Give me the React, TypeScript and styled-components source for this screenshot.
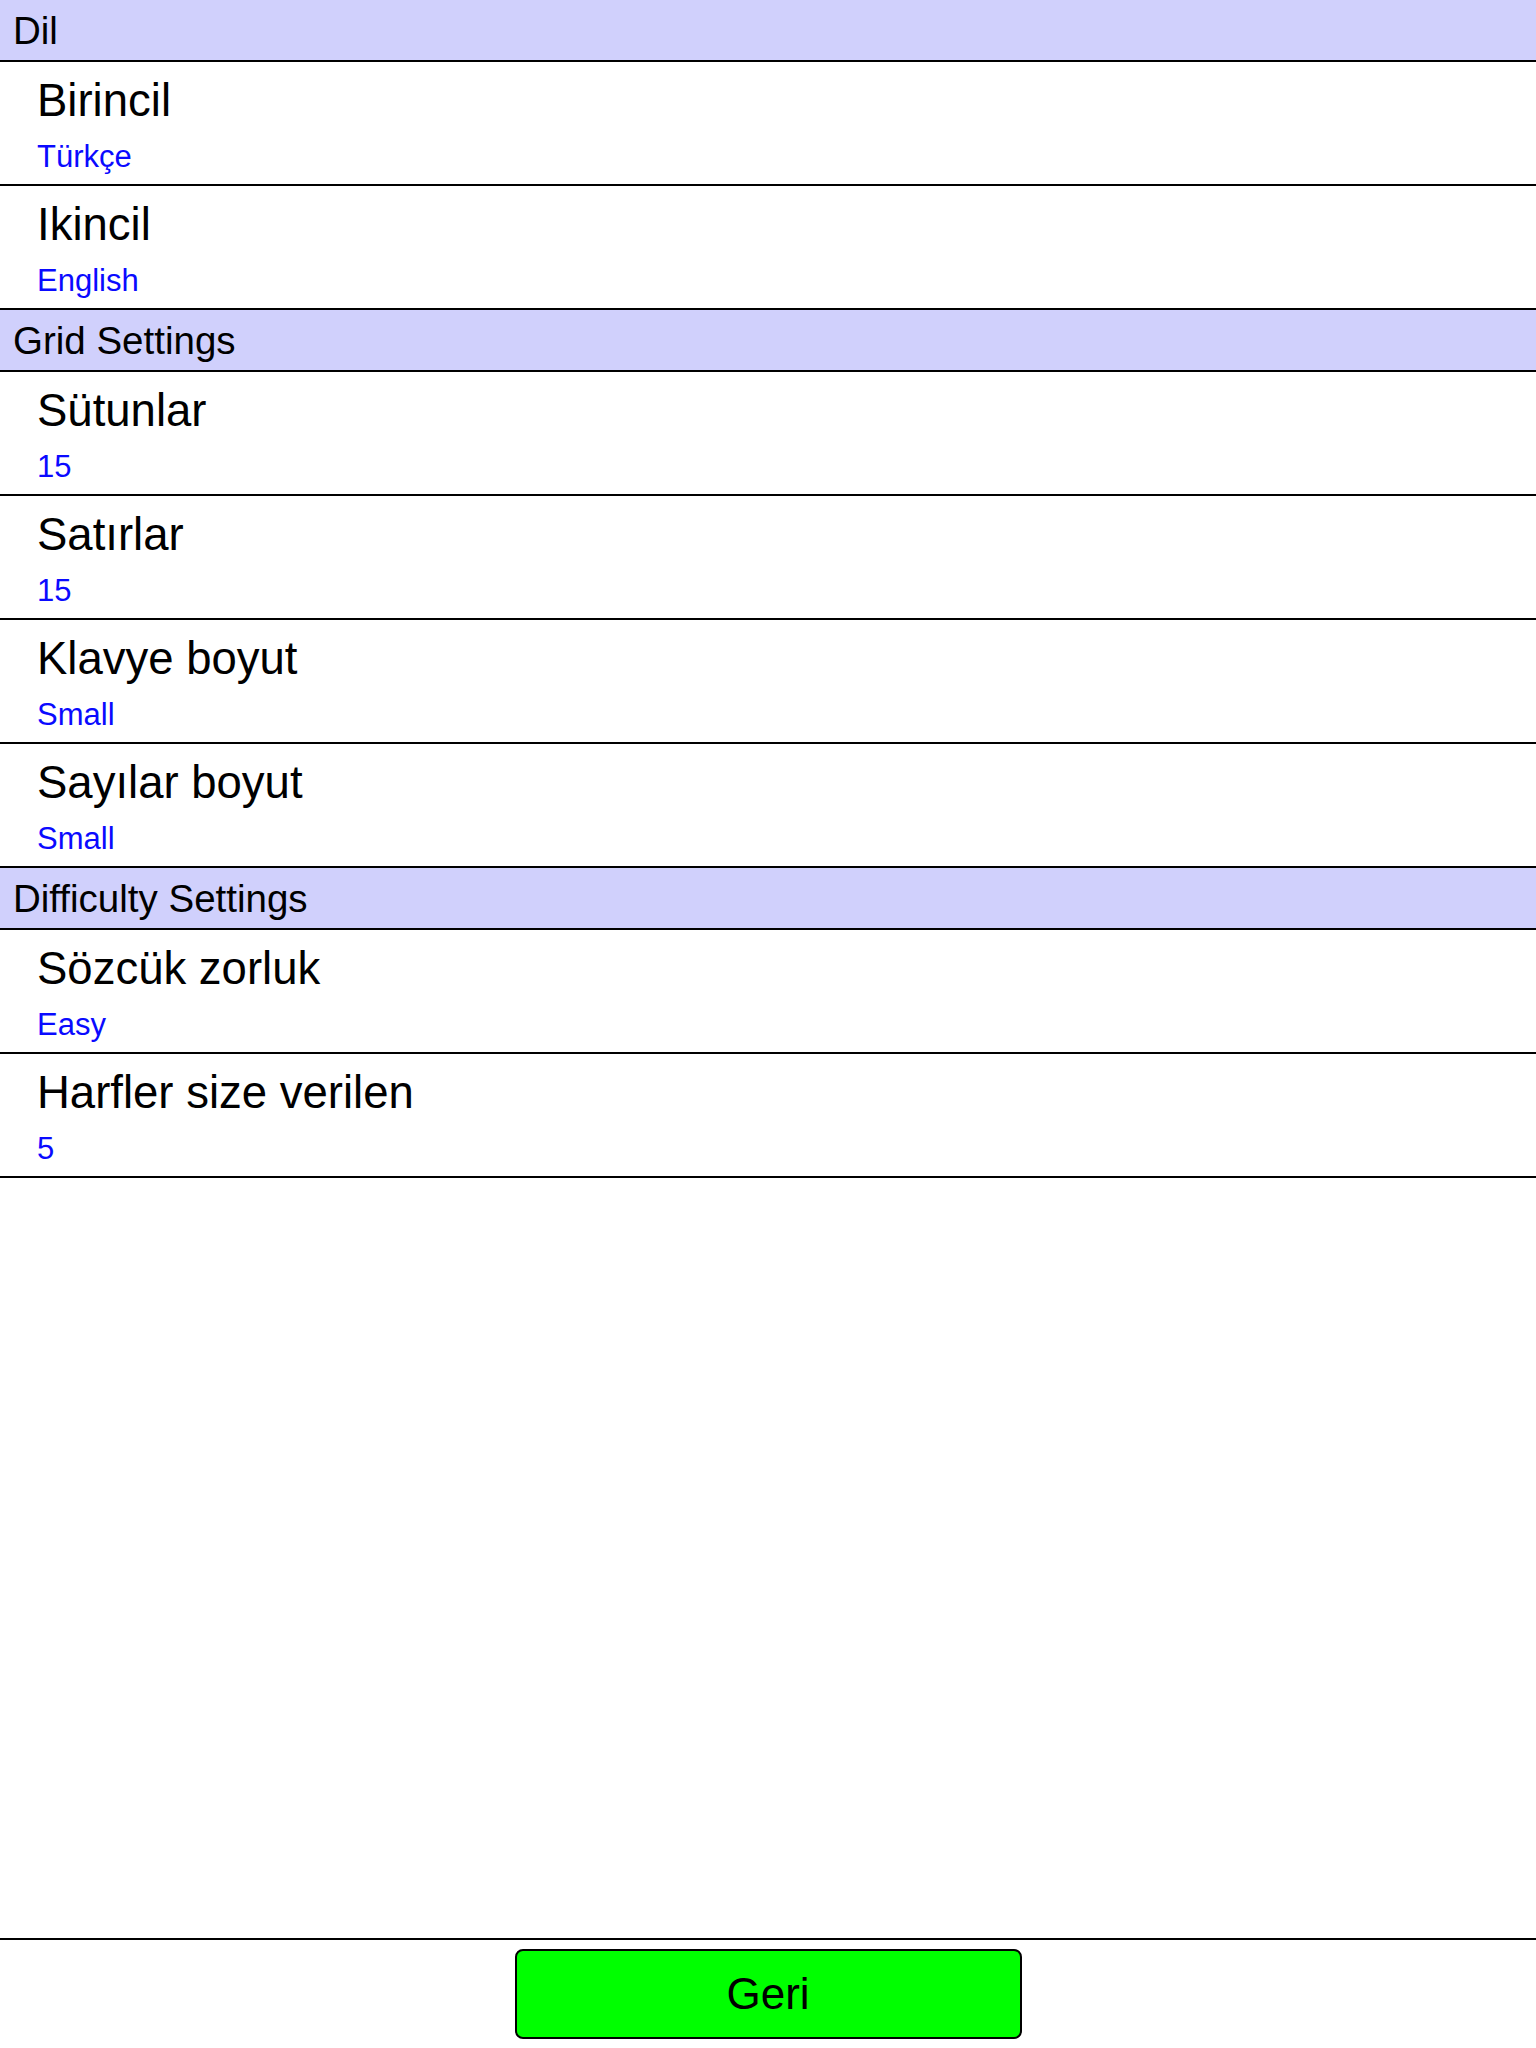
import styled, { createGlobalStyle } from "styled-components";

const GlobalStyle = createGlobalStyle`
  html, body {
    margin: 0;
    padding: 0;
    background: #ffffff;
    font-family: "Liberation Sans", Arial, Helvetica, sans-serif;
  }
`;

type Item = { title: string; value: string };
type Section = { header: string; items: Item[] };

const sections: Section[] = [
  {
    header: "Dil",
    items: [
      { title: "Birincil", value: "Türkçe" },
      { title: "Ikincil", value: "English" },
    ],
  },
  {
    header: "Grid Settings",
    items: [
      { title: "Sütunlar", value: "15" },
      { title: "Satırlar", value: "15" },
      { title: "Klavye boyut", value: "Small" },
      { title: "Sayılar boyut", value: "Small" },
    ],
  },
  {
    header: "Difficulty Settings",
    items: [
      { title: "Sözcük zorluk", value: "Easy" },
      { title: "Harfler size verilen", value: "5" },
    ],
  },
];

export default function App() {
  return (
    <>
      <GlobalStyle />
      <Screen>
        <SettingsList>
          {sections.map((section) => (
            <div key={section.header}>
              <SectionHeader>{section.header}</SectionHeader>
              {section.items.map((item) => (
                <Row key={item.title}>
                  <RowTitle>{item.title}</RowTitle>
                  <RowValue>{item.value}</RowValue>
                </Row>
              ))}
            </div>
          ))}
        </SettingsList>
        <Footer>
          <BackButton type="button">Geri</BackButton>
        </Footer>
      </Screen>
    </>
  );
}

const Screen = styled.div`
  width: 100%;
  height: 100vh;
  display: flex;
  flex-direction: column;
  overflow: hidden;
`;

const SettingsList = styled.div`
  flex: 1;
  display: flex;
  flex-direction: column;
`;

const SectionHeader = styled.div`
  height: 58px;
  padding: 2px 13px 0;
  background: #d0d0fc;
  border-bottom: 2px solid #000000;
  font-size: 38.5px;
  line-height: 58px;
  color: #000000;
  white-space: nowrap;
`;

const Row = styled.div`
  height: 122px;
  padding: 0 37px;
  border-bottom: 2px solid #000000;
  display: flex;
  flex-direction: column;
`;

const RowTitle = styled.div`
  margin-top: 14px;
  font-size: 45.5px;
  line-height: 50px;
  color: #000000;
`;

const RowValue = styled.div`
  margin-top: 13px;
  font-size: 31px;
  line-height: 36px;
  color: #0a0aff;
`;

const Footer = styled.div`
  border-top: 2px solid #000000;
  padding: 9px 0;
  display: flex;
  justify-content: center;
`;

const BackButton = styled.button`
  width: 507px;
  height: 90px;
  background: #00ff00;
  border: 2px solid #000000;
  border-radius: 8px;
  font-family: "Liberation Sans", Arial, Helvetica, sans-serif;
  font-size: 44px;
  color: #000000;
  padding: 0;
  cursor: pointer;
`;
